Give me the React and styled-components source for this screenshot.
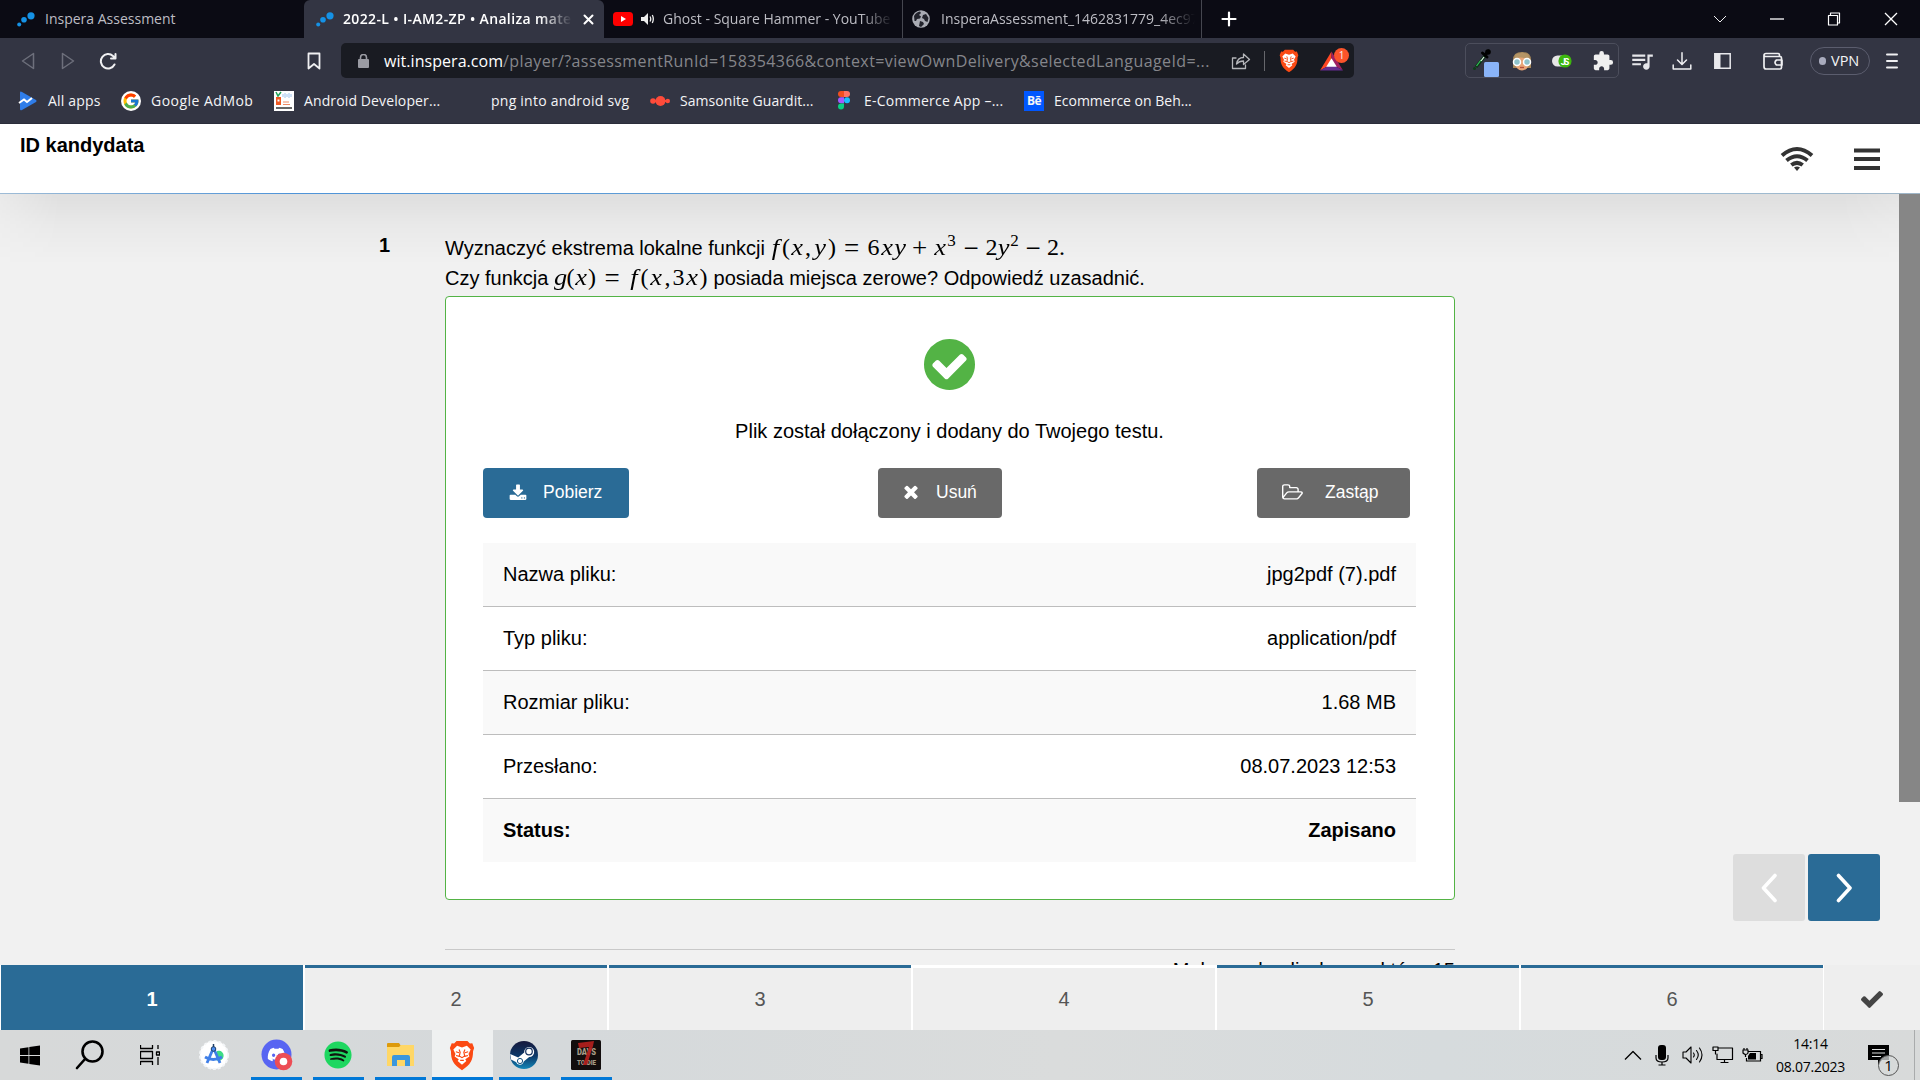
import React from "react";
import styled, { createGlobalStyle, css } from "styled-components";
import { FaDiscord, FaSpotify } from "react-icons/fa";
import { FcGoogle } from "react-icons/fc";
import { MdExtension, MdQueueMusic } from "react-icons/md";

const Global = createGlobalStyle`
  * { box-sizing: border-box; }
  html, body { margin: 0; padding: 0; overflow: hidden; background: #f1f1f1; }
  svg { display: block; flex: none; }
`;

const ui = `"Open Sans", "Noto Sans", sans-serif`;
const page = `"Liberation Sans", Arial, sans-serif`;

const Screen = styled.div`
  width: 1920px;
  height: 1080px;
  display: flex;
  flex-direction: column;
  overflow: hidden;
  font-family: ${page};
  font-size: 20px;
  color: #000;
`;

/* ---------- browser chrome ---------- */
const Chrome = styled.header`
  flex: none;
  height: 124px;
  background: #333543;
  border-bottom: 1px solid #2b2d3a;
  font-family: ${ui};
  font-size: 14px;
  color: #f4f4f6;
`;

const TabStrip = styled.div`
  height: 38px;
  display: flex;
  background: #0b0b14;
`;

const Tab = styled.div`
  width: ${(p) => p.$w}px;
  height: 38px;
  display: flex;
  align-items: center;
  padding-left: ${(p) => p.$pad}px;
  color: #bdbdc4;
  border-right: ${(p) => (p.$sep ? "1px solid #45464f" : "none")};
  ${(p) =>
    p.$active &&
    css`
      background: #333543;
      color: #fff;
      font-weight: 600;
      border-radius: 6px 6px 0 0;
    `}
`;

const TabTitle = styled.span`
  margin-left: ${(p) => p.$ml}px;
  width: ${(p) => p.$w}px;
  overflow: hidden;
  white-space: nowrap;
  line-height: 22px;
  letter-spacing: ${(p) => p.$ls || 0}px;
  mask-image: ${(p) => (p.$fade ? "linear-gradient(90deg,#000 86%,transparent)" : "none")};
`;

const Glyph = styled.span`
  flex: none;
  display: flex;
  align-items: center;
  justify-content: center;
  width: ${(p) => p.$w}px;
  margin-left: ${(p) => p.$ml || 0}px;
  padding-left: ${(p) => p.$pl || 0}px;
`;

const WindowButtons = styled.div`
  margin-left: auto;
  padding-right: 1px;
  display: flex;
  align-items: center;
`;

const Toolbar = styled.div`
  height: 44px;
  display: flex;
  align-items: center;
  padding: 1px 0 0 8px;
`;

const AddressBar = styled.div`
  width: 1013px;
  height: 35px;
  margin-left: 7px;
  display: flex;
  align-items: center;
  border-radius: 5px;
  background: #191b22;
`;

const Url = styled.span`
  width: 835px;
  margin-left: 15px;
  white-space: nowrap;
  font-size: 16px;
  line-height: 24px;
  letter-spacing: 0.4px;
  color: #85868b;
  b {
    font-weight: 400;
    letter-spacing: 0.05px;
    color: #fff;
  }
`;

const BarRule = styled.span`
  width: 1px;
  height: 20px;
  margin-left: 13px;
  background: #66676c;
`;

const Rewards = styled.span`
  position: relative;
  width: 30px;
  height: 26px;
  margin-left: 21px;
  padding-top: 3px;
`;

const RewardsCount = styled.span`
  position: absolute;
  left: 14px;
  top: 0;
  width: 15px;
  height: 15px;
  border-radius: 8px;
  background: #fb542b;
  font-size: 10px;
  line-height: 15px;
  text-align: center;
`;

const Extensions = styled.div`
  width: 154px;
  height: 35px;
  margin-left: 111px;
  display: flex;
  align-items: center;
  border: 1px solid #4c4e5c;
  border-radius: 5px;
`;

const Vpn = styled.span`
  width: 60px;
  height: 28px;
  margin-left: 17px;
  padding-left: 8px;
  display: flex;
  align-items: center;
  gap: 5px;
  border: 1px solid #5b5d6e;
  border-radius: 14px;
  font-size: 14.5px;
  &::before {
    content: "";
    width: 7px;
    height: 8px;
    border-radius: 4px;
    background: #a9abbd;
  }
`;

const Bookmarks = styled.nav`
  height: 37px;
  display: flex;
  align-items: center;
  padding-left: 18px;
`;

const Bookmark = styled.span`
  width: ${(p) => p.$w}px;
  display: flex;
  align-items: center;
  gap: 10px;
  white-space: nowrap;
  letter-spacing: ${(p) => p.$ls || 0}px;
`;

const Disc = styled.span`
  width: 20px;
  height: 20px;
  display: flex;
  align-items: center;
  justify-content: center;
  border-radius: 50%;
  background: #fff;
`;

const Behance = styled.span`
  width: 20px;
  height: 20px;
  background: #0057ff;
  font-size: 12px;
  font-weight: 700;
  line-height: 20px;
  text-align: center;
  letter-spacing: -0.5px;
`;

/* ---------- page ---------- */
const PageHeader = styled.header`
  position: relative;
  z-index: 1;
  flex: none;
  height: 70px;
  display: flex;
  justify-content: space-between;
  padding: 9px 40px 0 20px;
  background: #fff;
  border-bottom: 1px solid #8db4d6;
  border-image: linear-gradient(90deg, #9fbcd6, #4f94d8 15%, #5a9ad6 30%, #9dbdd6 85%, #9fb6c8) 1;
`;

const Shade = styled.div`
  height: 70px;
  margin-bottom: -70px;
  background: linear-gradient(180deg, rgba(0, 0, 0, 0.075), rgba(0, 0, 0, 0.03) 45%, transparent);
  mask-image: linear-gradient(90deg, rgba(0, 0, 0, 0.4), #000 60px, #000 1840px, rgba(0, 0, 0, 0.7));
`;

const Candidate = styled.strong`
  line-height: 25px;
`;

const HeaderIcons = styled.div`
  display: flex;
  align-items: center;
  gap: 40px;
  height: 52px;
`;

const Body = styled.main`
  flex: none;
  height: 771px;
  display: flex;
  background: #f1f1f1;
  overflow: hidden;
`;

const Content = styled.div`
  width: 1899px;
`;

const Scrollbar = styled.div`
  width: 21px;
  background: #f1f1f1;
  &::before {
    content: "";
    display: block;
    height: 608px;
    background: #868686;
  }
`;

const Question = styled.section`
  display: flex;
  padding: 38px 0 0 379px;
`;

const Num = styled.strong`
  width: 66px;
  line-height: 27px;
`;

const Main = styled.div`
  width: 1010px;
  padding-top: 1px;
`;

const Line = styled.div`
  height: 30px;
  line-height: 30px;
  display: flex;
  align-items: baseline;
  white-space: pre;
`;

const Prose = styled.span`
  width: ${(p) => (p.$w ? p.$w + "px" : "auto")};
`;

const atomSize = { s: 17, o: 27 };
const atomShift = { s: "translateY(-9px)", o: "translateY(2px)", i: "scaleX(1.1)" };

const Atom = styled.span`
  width: ${(p) => p.$w}px;
  display: inline-flex;
  justify-content: center;
  font-family: "Liberation Serif", "Times New Roman", serif;
  font-size: ${(p) => atomSize[p.$kind] || 24}px;
  line-height: 20px;
  font-style: ${(p) => (p.$kind === "i" ? "italic" : "normal")};
  transform: ${(p) => atomShift[p.$kind] || "none"};
`;

const Card = styled.div`
  width: 1010px;
  height: 604px;
  margin-top: 3px;
  padding: 42px 38px 0 37px;
  background: #fff;
  border: 1px solid #53b345;
  border-radius: 4px;
`;

const Done = styled.div`
  display: flex;
  flex-direction: column;
  align-items: center;
  gap: 28px;
  line-height: 26px;
`;

const Actions = styled.div`
  display: flex;
  justify-content: space-between;
  padding-right: 6px;
  margin-top: 24px;
`;

const Button = styled.button`
  width: ${(p) => p.$w}px;
  height: 50px;
  margin-right: ${(p) => p.$mr || 0}px;
  padding: 0 0 2px ${(p) => p.$pad}px;
  display: flex;
  align-items: center;
  gap: ${(p) => p.$gap}px;
  border: 0;
  border-radius: 4px;
  background: ${(p) => (p.$primary ? "#2a6b96" : "#696969")};
  color: #fff;
  font: 17.5px ${page};
`;

const Table = styled.dl`
  margin: 25px 0 0;
`;

const Row = styled.div`
  height: 64px;
  display: flex;
  justify-content: space-between;
  padding: 0 20px;
  line-height: 62px;
  border-bottom: 1px solid #bdbdbd;
  dd { margin: 0; }
  &:nth-child(odd) { background: #f9f9f9; }
  &:last-child { border: 0; font-weight: 700; height: 63px; }
`;

const Points = styled.div`
  width: 1010px;
  margin-top: 49px;
  padding-top: 5px;
  border-top: 1px solid #c9c9c9;
  text-align: right;
  line-height: 30px;
`;

const Pager = styled.div`
  position: absolute;
  left: 1733px;
  top: 854px;
  display: flex;
  gap: 3px;
`;

const PagerButton = styled.button`
  width: 72px;
  height: 67px;
  padding: 0;
  display: flex;
  align-items: center;
  justify-content: center;
  border: 0;
  border-radius: 3px;
  background: ${(p) => (p.$on ? "#2a6b96" : "#dddddd")};
`;

const Steps = styled.nav`
  flex: none;
  height: 65px;
  display: flex;
  gap: 2px;
  padding-left: 1px;
  background: #fff;
`;

const Step = styled.div`
  width: 302px;
  border-top: 3px solid ${(p) => (p.$blank ? "#fff" : "#2a6b96")};
  background: ${(p) => (p.$on ? "#2a6b96" : "#eeeeee")};
  color: ${(p) => (p.$on ? "#fff" : "#555")};
  font-weight: ${(p) => (p.$on ? 700 : 400)};
  line-height: 62px;
  text-align: center;
`;

const Finish = styled.div`
  flex: 1;
  display: flex;
  align-items: center;
  justify-content: center;
  margin-left: -1px;
  padding-top: 3px;
  background: #eeeeee;
`;

/* ---------- taskbar ---------- */
const Taskbar = styled.footer`
  flex: none;
  height: 50px;
  display: flex;
  align-items: stretch;
  background: linear-gradient(90deg, #d7d9d9, #d5d9db 30%, #dadcdc 55%, #d6dbdd 75%, #d8dada);
  font-family: ${ui};
  font-size: 14px;
`;

const TaskItem = styled.div`
  width: ${(p) => p.$w}px;
  margin-left: ${(p) => p.$ml || 0}px;
  height: 50px;
  display: flex;
  align-items: center;
  justify-content: center;
  background: ${(p) => (p.$active ? "#eff1f1" : "transparent")};
  border-bottom: ${(p) => (p.$run ? "3px solid #0078d7" : "none")};
  padding: ${(p) => (p.$run ? `3px ${p.$pr ?? 2}px 0 0` : 0)};
`;

const Tray = styled.div`
  margin-left: auto;
  display: flex;
  align-items: center;
`;

const Clock = styled.div`
  width: 80px;
  margin-left: 8px;
  padding-right: 1px;
  text-align: center;
  font-size: 14px;
  line-height: 23px;
  letter-spacing: -0.25px;
`;

const Notice = styled.div`
  position: relative;
  width: 32px;
  height: 50px;
  margin-left: 17px;
  padding-top: 15px;
`;

const NoticeCount = styled.span`
  position: absolute;
  left: 10px;
  top: 25px;
  width: 21px;
  height: 21px;
  border: 1px solid #555;
  border-radius: 50%;
  background: rgba(215, 218, 218, 0.75);
  font-size: 15px;
  line-height: 19px;
  text-align: center;
`;

const Peek = styled.div`
  width: 6px;
  height: 50px;
  margin-left: 14px;
  border-left: 1px solid #a9abac;
`;

/* ---------- drawings ---------- */
const Dots = () => (
  <svg width="18" height="18" viewBox="0 0 18 18" fill="#1592e6">
    <circle cx="2.2" cy="14.6" r="2" /><circle cx="7" cy="9.8" r="2.8" /><circle cx="14" cy="5.8" r="3.6" />
  </svg>
);
const Stroke = ({ w = 20, h = 20, d, sw = 1.5, c = "#f0f0f2", fill = "none", cap = "round" }) => (
  <svg width={w} height={h} viewBox={`0 0 ${w} ${h}`} fill={fill} stroke={c} strokeWidth={sw} strokeLinecap={cap} strokeLinejoin="round">
    <path d={d} />
  </svg>
);
const Fa = ({ d, s, c = "#fff", vb = "0 0 1792 1792", w }) => (
  <svg width={w || s} height={s} viewBox={vb} fill={c}><path d={d} /></svg>
);
const FA = {
  circle: "M1412 734q0-28-18-46l-91-90q-19-19-45-19t-45 19l-408 407-226-226q-19-19-45-19t-45 19l-91 90q-18 18-18 46 0 27 18 45l362 362q19 19 45 19 27 0 46-19l543-543q18-18 18-45zm252 162q0 209-103 385.5t-279.5 279.5-385.5 103-385.5-103-279.5-279.5-103-385.5 103-385.5 279.5-279.5 385.5-103 385.5 103 279.5 279.5 103 385.5z",
  check: "M1671 566q0 40-28 68l-724 724-136 136q-28 28-68 28t-68-28l-136-136-362-362q-28-28-28-68t28-68l136-136q28-28 68-28t68 28l294 295 656-657q28-28 68-28t68 28l136 136q28 28 28 68z",
  times: "M1490 1322q0 40-28 68l-136 136q-28 28-68 28t-68-28l-294-294-294 294q-28 28-68 28t-68-28l-136-136q-28-28-28-68t28-68l294-294-294-294q-28-28-28-68t28-68l136-136q28-28 68-28t68 28l294 294 294-294q28-28 68-28t68 28l136 136q28 28 28 68t-28 68l-294 294 294 294q28 28 28 68z",
  folder: "M1845 931q0-35-53-35h-1088q-40 0-85.5 21.5t-71.5 52.5l-294 363q-18 24-18 40 0 35 53 35h1088q40 0 86-22t71-53l294-363q18-22 18-39zm-1141-163h768v-160q0-40-28-68t-68-28h-576q-40 0-68-28t-28-68v-64q0-40-28-68t-68-28h-320q-40 0-68 28t-28 68v853l256-315q44-53 116-87.5t140-34.5zm1269 163q0 62-46 120l-295 363q-43 53-116 87.5t-140 34.5h-1088q-92 0-158-66t-66-158v-960q0-92 66-158t158-66h320q92 0 158 66t66 158v32h544q92 0 158 66t66 158v160h192q54 0 99 24.5t67 70.5q15 32 15 68z",
  download: "M1344 1344q0-26-19-45t-45-19-45 19-19 45 19 45 45 19 45-19 19-45zm256 0q0-26-19-45t-45-19-45 19-19 45 19 45 45 19 45-19 19-45zm128-224v320q0 40-28 68t-68 28h-1472q-40 0-68-28t-28-68v-320q0-40 28-68t68-28h465l135 136q58 56 136 56t136-56l136-136h464q40 0 68 28t28 68zm-325-569q17 41-14 70l-448 448q-18 19-45 19t-45-19l-448-448q-31-29-14-70 17-39 59-39h256v-448q0-26 19-45t45-19h256q26 0 45 19t19 45v448h256q42 0 59 39z",
};
const YouTube = () => (
  <svg width="20" height="14" viewBox="0 0 20 14"><rect width="20" height="14" rx="3.5" fill="#f00" /><path d="M8 4l5 3-5 3z" fill="#fff" /></svg>
);
const Speaker = () => (
  <svg width="13" height="12" viewBox="0 0 13 12"><path d="M0 4h3l4-4v12l-4-4H0z" fill="#eee" /><path d="M9 3.5q1.5 2.5 0 5M11.3 2q2 4 0 8" fill="none" stroke="#eee" strokeWidth="1.3" /></svg>
);
const Globe = () => (
  <svg width="18" height="18" viewBox="0 0 18 18"><circle cx="9" cy="9" r="8.8" fill="#a9abb3" /><path d="M2 6q2-4 6-4.5l1 1.5-2 2 2 1.500-1 2-3 .5-1 2H2.500zM11 5l3-1 2.500 4-1 4-2.500-1-1-2-2-1zM8 11l3 1 1 2-3 3-2-1z" fill="#22232c" /></svg>
);
const PlayConsole = () => (
  <svg width="20" height="20" viewBox="0 0 20 20"><path d="M2 1.500Q2 0 4 1l14 8q1.300 1 0 2L4 19q-2 1-2-1z" fill="#2f7de9" /><path d="M1 12l5-3.500 3 2.500 5-4" fill="none" stroke="#fff" strokeWidth="2" /></svg>
);
const AndroidShow = () => (
  <svg width="20" height="20" viewBox="0 0 20 20"><path fill="#fff" d="M0 0h20v20H0z" /><path d="M2 1l2 4 3-4" stroke="#22a45a" strokeWidth="1.500" fill="none" /><path fill="#ef5a24" d="M2 6h5v8H2z" /><path fill="#fff" d="M3.500 8.500h2v2h-2z" /><path d="M9 3v3M11 2v5M13 3v3M15 2v5M17 3v3" stroke="#9fc4ef" /><path d="M9 11h6M9 13.500h7" stroke="#ef8a64" /><path d="M2 17h16" stroke="#333" strokeWidth="1.500" /></svg>
);
const Links = () => (
  <svg width="20" height="12" viewBox="0 0 20 12" fill="#ff4b3a"><path d="M3 5h14v2H3z" /><circle cx="3" cy="6" r="2.800" /><circle cx="10.500" cy="6" r="5" /><circle cx="17.800" cy="6" r="2.200" /></svg>
);
const Figma = () => (
  <svg width="20" height="19" viewBox="0 0 20 19"><path d="M7 0h3v6H7a3 3 0 010-6z" fill="#f24e1e" /><path d="M10 0h3a3 3 0 010 6h-3z" fill="#ff7262" /><path d="M7 6.300h3v6H7a3 3 0 010-6z" fill="#a259ff" /><circle cx="13" cy="9.300" r="3" fill="#1abcfe" /><path d="M7 12.600h3v3a3 3 0 11-3-3z" fill="#0acf83" /></svg>
);
const Brave = ({ w, h }) => (
  <svg width={w} height={h} viewBox="0 0 24 28">
    <path d="M7 .5h10l2.300 2.500 2.200-.3L23.200 7l-1 3c0 8-2 12-10.200 17.500C3.800 22 1.800 18 1.800 10l-1-3 1.700-4.300 2.200.3z" fill="#fb4a14" />
    <path d="M12 6.500l4.500-1.500L20 8.500l-2 4 .8 2.500-3.800 2.500 1 1.500-4 3.500L8 19l1-1.500L5.200 15l.8-2.500-2-4L7.500 5z" fill="#fff" />
    <path d="M9.300 8.500l1 2.500-.8 3.500L12 16l2.500-1.500-.8-3.500 1-2.500M6.300 10.500l3 1M17.700 10.500l-3 1M10.300 18.500h3.400M6.500 14l3 .8M17.500 14l-3 .8" fill="none" stroke="#fb4a14" strokeWidth="1.100" />
  </svg>
);
const Bat = () => (
  <svg width="23" height="20" viewBox="0 0 24 20"><path d="M12 0L0 20l12-7z" fill="#ff4724" /><path d="M12 0l12 20-12-7z" fill="#9e1f63" /><path d="M0 20h24l-12-7z" fill="#662d91" /><path d="M12 7l5.500 9h-11z" fill="#fff" /></svg>
);
const Dropper = () => (
  <svg width="30" height="33" viewBox="0 0 30 33"><path d="M7 23L16 12" stroke="#0d3518" strokeWidth="3" /><path d="M7.500 22L12 16" stroke="#35c05a" strokeWidth="1.200" /><path d="M12 17L15 13" stroke="#e8f5ea" strokeWidth="1.200" /><path d="M13.500 9l4.500 4M16 11l3.500-4" stroke="#000" strokeWidth="3" strokeLinecap="round" /><circle cx="19" cy="8" r="2.800" fill="#000" /><circle cx="5.500" cy="24.500" r="1.500" fill="#0c3d18" /><rect x="15" y="18" width="15" height="15" rx="1.500" fill="#8ab4f8" /></svg>
);
const Face = () => (
  <svg width="20" height="20" viewBox="0 0 20 20"><path d="M1 11Q0 1 10 1t9 10v6H1z" fill="#a5875a" /><ellipse cx="10" cy="11.500" rx="7" ry="8" fill="#e8a577" /><path d="M2.500 8.500q4-4 15 0l-1-5-6-2-7 2z" fill="#b59566" /><circle cx="5" cy="11" r="3.500" fill="#8fc3cb" stroke="#fff" strokeWidth="1.500" /><circle cx="15" cy="11" r="3.500" fill="#8fc3cb" stroke="#fff" strokeWidth="1.500" /><path d="M8 16.500h4" stroke="#b8503c" strokeWidth="1.300" /></svg>
);
const JsSwitch = () => (
  <svg width="20" height="14" viewBox="0 0 20 14"><rect y="1.500" width="17" height="11" rx="5.500" fill="#e6e6e6" /><circle cx="13" cy="7" r="6.600" fill="#3db70e" /><text x="8.800" y="10.500" fontSize="9" fontWeight="700" fontFamily="Roboto" fill="#fff" textLength="8.500">JS</text></svg>
);
const Wifi = () => (
  <svg width="34" height="27" viewBox="0 0 34 27" fill="none" stroke="#333" strokeWidth="4">
    <path d="M2 9.500Q17-3.500 32 9.500" /><path d="M6.500 14.500q10.500-8.500 21 0" /><path d="M11.300 19q5.700-4.200 11.400 0" /><path d="M14 21.500q3-2 6 0l-3 3.500z" fill="#333" stroke="none" />
  </svg>
);
const Burger = () => (
  <svg width="26" height="22" viewBox="0 0 26 22" fill="#333"><path d="M0 .5h26v4H0zM0 9h26v4H0zM0 18h26v4H0z" /></svg>
);
const Win = () => (
  <svg width="20" height="21" viewBox="0 0 20 21"><path d="M0 3.500l8.500-1.300v7.900H0zM9.300 2L20 .5v9.600H9.300zM0 10.900h8.500v7.900L0 17.600zM9.300 10.900H20v9.600L9.300 19z" /></svg>
);
const Studio = () => (
  <svg width="30" height="30" viewBox="0 0 30 30"><circle cx="15" cy="15" r="14" fill="#fff" stroke="#f4f6f8" strokeWidth="2" strokeDasharray="3 2" /><path d="M18 11a5 5 0 11-1 9z" fill="#3ddc84" /><path d="M14 9L8 23M15 9l6 14M6 17q8 5 17 0" stroke="#3f7fe8" strokeWidth="2.800" fill="none" /><circle cx="14.500" cy="9" r="2.300" fill="#4b8cf0" stroke="#1f3f66" /><path d="M14.500 4v3" stroke="#1f3f66" strokeWidth="1.500" /></svg>
);
const Discord = () => (
  <svg width="32" height="32" viewBox="0 0 32 32"><circle cx="15.500" cy="15.500" r="15" fill="#5865f2" /><FaDiscord x="6" y="6" size="19" color="#fff" /><circle cx="22.500" cy="22.500" r="8.800" fill="#ed4d55" /><circle cx="22.500" cy="22.500" r="3.800" fill="#fff" /></svg>
);
const Spotify = () => (
  <svg width="28" height="28" viewBox="0 0 28 28"><circle cx="14" cy="14" r="12" fill="#10150f" /><FaSpotify size="28" color="#1ed760" /></svg>
);
const Explorer = () => (
  <svg width="28" height="24" viewBox="0 0 28 24"><path d="M0 1q0-1 1-1h11l2 3-2 3H0z" fill="#dd9a0b" /><path d="M0 4h12l2-2h13v21H0z" fill="#ffd766" /><path d="M5 23v-9q0-2 2-2h14q2 0 2 2v9h-5v-6h-8v6z" fill="#3b97de" /></svg>
);
const Steam = () => (
  <svg width="28" height="28" viewBox="0 0 28 28"><defs><linearGradient id="st" x2="0" y2="1"><stop stopColor="#17193c" /><stop offset=".55" stopColor="#0c3a6b" /><stop offset="1" stopColor="#1387b8" /></linearGradient></defs><circle cx="14" cy="14" r="14" fill="url(#st)" /><path d="M.2 13l8 3.500 6-5a5 5 0 115 4.500l-5.500 4.500A4 4 0 016 21l-5-2.500z" fill="#fff" /><circle cx="19" cy="10.500" r="3.300" fill="#fff" stroke="#14315f" strokeWidth="1.200" /><circle cx="10" cy="20" r="2.600" fill="none" stroke="#14517f" /></svg>
);
const SevenDays = () => (
  <svg width="30" height="30" viewBox="0 0 30 30"><rect width="30" height="30" rx="1.500" fill="#120d0d" /><text x="6" y="15" fontFamily="Roboto" fontWeight="900" fontSize="9" fill="#a79c88" textLength="19" lengthAdjust="spacingAndGlyphs">DAYS</text><text x="6" y="25" fontFamily="Roboto" fontWeight="900" fontSize="8" fill="#a79c88" textLength="19" lengthAdjust="spacingAndGlyphs">TO DIE</text><path d="M7 3l16-2-1 5-6 19h-4l6-18-10 1z" fill="#b3201d" opacity=".92" /></svg>
);
const Mic = () => (
  <svg width="14" height="21" viewBox="0 0 14 21"><rect x="3" width="8" height="15" rx="3" /><path d="M1 10v3q0 4 6 4t6-4v-3M7 17v3M3.500 20h7" fill="none" stroke="#000" strokeWidth="1.200" /></svg>
);
const Battery = () => (
  <svg width="21" height="15" viewBox="0 0 21 15"><path d="M6 3.500h12.500v9.500H4.500v-3M18.500 6.500H20v4h-1.500M1 2h5v3q-2 3-5 0zM2 0v2M5 0v2M3.500 6v3" fill="none" stroke="#000" strokeWidth="1.200" /><path d="M8 5h6v6.500H6V8z" /></svg>
);
const Note = () => (
  <svg width="21" height="20" viewBox="0 0 21 20"><path d="M0 0h21v15h-7l-4 5v-5H0z" /><path d="M4 4.500h13M4 8h13M4 11.500h9" stroke="#dcdede" strokeWidth="1.200" /></svg>
);

const rows = [
  ["Nazwa pliku:", "jpg2pdf (7).pdf"],
  ["Typ pliku:", "application/pdf"],
  ["Rozmiar pliku:", "1.68 MB"],
  ["Przesłano:", "08.07.2023 12:53"],
  ["Status:", "Zapisano"],
];

// [glyph, advance, kind] – i: italic variable, s: superscript, o: operator
const formula1 = [["f", 13, "i"], ["(", 8], ["x", 14, "i"], [",", 8], ["y", 16, "i"], [")", 8], ["=", 31, "o"], ["6", 13], ["x", 14, "i"], ["y", 12, "i"], ["+", 27, "o"], ["x", 14, "i"], ["3", 9, "s"], ["−", 30, "o"], ["2", 11], ["y", 13, "i"], ["2", 9, "s"], ["−", 28, "o"], ["2", 12], [".", 6]];
const formula2 = [["g", 13, "i"], ["(", 7], ["x", 14, "i"], [")", 8], ["=", 32, "o"], ["f", 12, "i"], ["(", 9], ["x", 14, "i"], [",", 9], ["3", 13], ["x", 14, "i"], [")", 9]];
const Formula = ({ atoms }) => atoms.map(([t, w, k], n) => (
  <Atom key={n} $w={w} $kind={k}>{t}</Atom>
));

export default function App() {
  return (
    <Screen>
      <Global />
      <Chrome>
        <TabStrip>
          <Tab $w={304} $pad={17}><Dots /><TabTitle $ml={10} $w={160}>Inspera Assessment</TabTitle></Tab>
          <Tab $w={300} $pad={12} $active>
            <Dots /><TabTitle $ml={9} $w={229} $fade $ls={0.36}>2022-L • I-AM2-ZP • Analiza matematyczna</TabTitle>
            <Glyph $w={12} $ml={10}><Stroke w={11} h={11} d="M1.500 1.500l8 8M9.500 1.500l-8 8" sw={2} c="#fff" /></Glyph>
          </Tab>
          <Tab $w={299} $pad={9} $sep><YouTube /><Glyph $w={13} $ml={8}><Speaker /></Glyph><TabTitle $ml={9} $w={230} $fade>Ghost - Square Hammer - YouTube</TabTitle></Tab>
          <Tab $w={299} $pad={9} $sep><Globe /><TabTitle $ml={11} $w={254} $fade>InsperaAssessment_1462831779_4ec97</TabTitle></Tab>
          <Glyph $w={54}><Stroke w={16} h={16} d="M8 1.500v13M1.500 8h13" sw={2.2} c="#fff" /></Glyph>
          <WindowButtons>
            <Glyph $w={57}><Stroke w={14} h={8} d="M1 1l6 6 6-6" sw={1} cap="butt" /></Glyph>
            <Glyph $w={57}><Stroke w={14} h={2} d="M0 1h14" sw={1.3} cap="butt" c="#fff" /></Glyph>
            <Glyph $w={57}><Stroke w={14} h={14} d="M1.500 3.500h9v9.500h-9zM3.500 3.500V1h9v10h-2" sw={1.2} cap="butt" c="#fff" /></Glyph>
            <Glyph $w={57}><Stroke w={14} h={14} d="M1 1l12 12M13 1L1 13" sw={1.3} cap="butt" c="#fff" /></Glyph>
          </WindowButtons>
        </TabStrip>
        <Toolbar>
          <Glyph $w={40}><Stroke w={14} h={18} d="M12.500 1.500v15L1.500 9z" c="#6d6f7b" /></Glyph>
          <Glyph $w={40}><Stroke w={14} h={18} d="M1.500 1.500v15L12.500 9z" c="#6d6f7b" /></Glyph>
          <Glyph $w={40}><Stroke w={18} h={18} d="M15.500 12.500A7.200 7.200 0 1 1 14 4l2 2M16.500 2v4.500H12" sw={2} /></Glyph>
          <Glyph $w={40} $ml={166}><Stroke w={14} h={18} d="M1.500 1.500h11v15L7 12l-5.500 4.500z" sw={1.8} /></Glyph>
          <AddressBar>
            <Glyph $w={11} $ml={17}><svg width="11" height="14" viewBox="0 0 11 14"><rect y="5" width="11" height="9" rx="1" fill="#9a9ba3" /><path d="M2.500 6V3.500a3 3 0 016 0V6" fill="none" stroke="#9a9ba3" strokeWidth="1.600" /></svg></Glyph>
            <Url><b>wit.inspera.com</b>/player/?assessmentRunId=158354366&amp;context=viewOwnDelivery&amp;selectedLanguageId=...</Url>
            <Glyph $w={20} $ml={12}><Stroke w={20} h={18} d="M5 6H1.500v10.500h13V13M5.500 12q1-6.500 7-6.500V2l6 5.500-6 5V9Q8 9 5.500 12z" c="#b5b6ba" sw={1.3} /></Glyph>
            <BarRule />
            <Glyph $w={20} $ml={14}><Brave w={20} h={24} /></Glyph>
            <Rewards><Bat /><RewardsCount>1</RewardsCount></Rewards>
          </AddressBar>
          <Extensions>
            <Glyph $w={36}><Dropper /></Glyph>
            <Glyph $w={40}><Face /></Glyph>
            <Glyph $w={40}><JsSwitch /></Glyph>
            <Glyph $w={36} $pl={5}><MdExtension size={22} color="#f0f0f0" /></Glyph>
          </Extensions>
          <Glyph $w={40} $ml={3}><MdQueueMusic size={26} color="#e6e6ea" /></Glyph>
          <Glyph $w={40}><Stroke w={20} h={18} d="M10 .8v11.500M5.500 8l4.500 4.500L14.500 8M1.200 13v4h17.600v-4" /></Glyph>
          <Glyph $w={40}><svg width="17" height="16" viewBox="0 0 17 16"><path d="M.800.800h15.400v14.400H.800z" fill="none" stroke="#e8e8ec" strokeWidth="1.500" /><path d="M1 1h5.500v14H1z" fill="#e8e8ec" /></svg></Glyph>
          <Glyph $w={40} $ml={11}><Stroke w={20} h={18} d="M16.500 4.500V3q0-1.500-1.500-1.500H3Q1 1.500 1 3.500v11Q1 17 3 17h14q1.500 0 1.500-1.500V6Q18.500 4.500 17 4.500H3q-2 0-2-1M19 8h-5.500q-3 2.500 0 5H19z" sw={1.7} /></Glyph>
          <Vpn>VPN</Vpn>
          <Glyph $w={20} $ml={12}><Stroke w={12} h={16} d="M1 1.500h10M1 8h10M1 14.500h10" sw={2} /></Glyph>
        </Toolbar>
        <Bookmarks>
          <Bookmark $w={103} $ls={0.2}><PlayConsole />All apps</Bookmark>
          <Bookmark $w={153} $ls={0.48}><Disc><FcGoogle size={18} /></Disc>Google AdMob</Bookmark>
          <Bookmark $w={187} $ls={0.12}><AndroidShow />Android Developer...</Bookmark>
          <Bookmark $w={189} $ls={0.24}><Glyph $w={20} />png into android svg</Bookmark>
          <Bookmark $w={184} $ls={0.05}><Links />Samsonite Guardit...</Bookmark>
          <Bookmark $w={190} $ls={0.24}><Figma />E-Commerce App –...</Bookmark>
          <Bookmark $w={190}><Behance>Bē</Behance>Ecommerce on Beh...</Bookmark>
        </Bookmarks>
      </Chrome>

      <PageHeader>
        <Candidate>ID kandydata</Candidate>
        <HeaderIcons><Wifi /><Burger /></HeaderIcons>
      </PageHeader>

      <Body>
        <Content>
          <Shade />
          <Question>
            <Num>1</Num>
            <Main>
              <Line><Prose $w={324}>Wyznaczyć ekstrema lokalne funkcji</Prose><Formula atoms={formula1} /></Line>
              <Line><Prose $w={109}>Czy funkcja</Prose><Formula atoms={formula2} /><Prose> posiada miejsca zerowe? Odpowiedź uzasadnić.</Prose></Line>
              <Card>
                <Done>
                  <Fa d={FA.circle} s={51} c="#53b345" vb="128 128 1536 1536" />
                  <span>Plik został dołączony i dodany do Twojego testu.</span>
                </Done>
                <Actions>
                  <Button $w={146} $pad={26} $gap={16} $primary><Fa d={FA.download} s={17} vb="0 0 1792 1600" w={18} />Pobierz</Button>
                  <Button $w={124} $pad={26} $gap={18} $mr={6}><Fa d={FA.times} s={14} vb="302 302 1188 1252" />Usuń</Button>
                  <Button $w={153} $pad={25} $gap={22}><Fa d={FA.folder} s={16} w={21} vb="64 128 1920 1440" />Zastąp</Button>
                </Actions>
                <Table>
                  {rows.map(([k, v]) => <Row key={k}><dt>{k}</dt><dd>{v}</dd></Row>)}
                </Table>
              </Card>
              <Points>Maksymalna liczba punktów: 15</Points>
            </Main>
          </Question>
        </Content>
        <Scrollbar />
      </Body>
      <Pager>
        <PagerButton><Stroke w={20} h={30} d="M16 2.500L4.500 15 16 27.500" sw={3.6} c="#fff" /></PagerButton>
        <PagerButton $on><Stroke w={20} h={30} d="M4.500 2.500L16 15 4.500 27.500" sw={3.6} c="#fff" /></PagerButton>
      </Pager>

      <Steps>
        {[1, 2, 3, 4, 5, 6].map((n) => <Step key={n} $on={n === 1} $blank={n === 4}>{n}</Step>)}
        <Finish><Fa d={FA.check} s={18} w={22} c="#444" vb="121 270 1550 1252" /></Finish>
      </Steps>

      <Taskbar>
        <TaskItem $w={60}><Win /></TaskItem>
        <TaskItem $w={60}><Stroke w={30} h={30} d="M27.500 11.500a10 10 0 11-20 0 10 10 0 0120 0M10.500 18.500L2 28" c="#000" sw={2.6} /></TaskItem>
        <TaskItem $w={60}><Stroke w={20} h={20} d="M.5 0v3.500h12V0M.5 6.500h12v7H.5zM.5 20v-3.500h12V20M18 0v4M18 12v8M16.500 7h3v3h-3z" c="#000" sw={1.3} cap="butt" /></TaskItem>
        <TaskItem $w={60} $ml={4}><Studio /></TaskItem>
        <TaskItem $w={51} $ml={7} $run $pr={0}><Discord /></TaskItem>
        <TaskItem $w={51} $ml={11} $run><Spotify /></TaskItem>
        <TaskItem $w={51} $ml={11} $run $pr={0}><Explorer /></TaskItem>
        <TaskItem $w={61} $ml={6} $run $active><Brave w={26} h={31} /></TaskItem>
        <TaskItem $w={51} $ml={6} $run><Steam /></TaskItem>
        <TaskItem $w={51} $ml={11} $run><SevenDays /></TaskItem>
        <Tray>
          <Glyph $w={18}><Stroke w={18} h={10} d="M1 9.500l8-8 8 8" c="#000" sw={1.3} cap="butt" /></Glyph>
          <Glyph $w={14} $ml={13}><Mic /></Glyph>
          <Glyph $w={22} $ml={13}><Stroke w={22} h={18} d="M1 6h3l5-5v16l-5-5H1zM11.500 7q1.500 2 0 4M14.500 4.500q3.500 4.500 0 9M17.500 2q5 7 0 14" c="#000" sw={1.1} /></Glyph>
          <Glyph $w={22} $ml={8}><Stroke w={22} h={18} d="M6 2h14.500v11.500H5V8M12.500 13.500V16M9 16.500h7M1 1h5v3.500H1zM3.500 4.500V8" c="#000" sw={1.2} /></Glyph>
          <Glyph $w={21} $ml={8}><Battery /></Glyph>
          <Clock>14:14<br />08.07.2023</Clock>
          <Notice><Note /><NoticeCount>1</NoticeCount></Notice>
          <Peek />
        </Tray>
      </Taskbar>
    </Screen>
  );
}
